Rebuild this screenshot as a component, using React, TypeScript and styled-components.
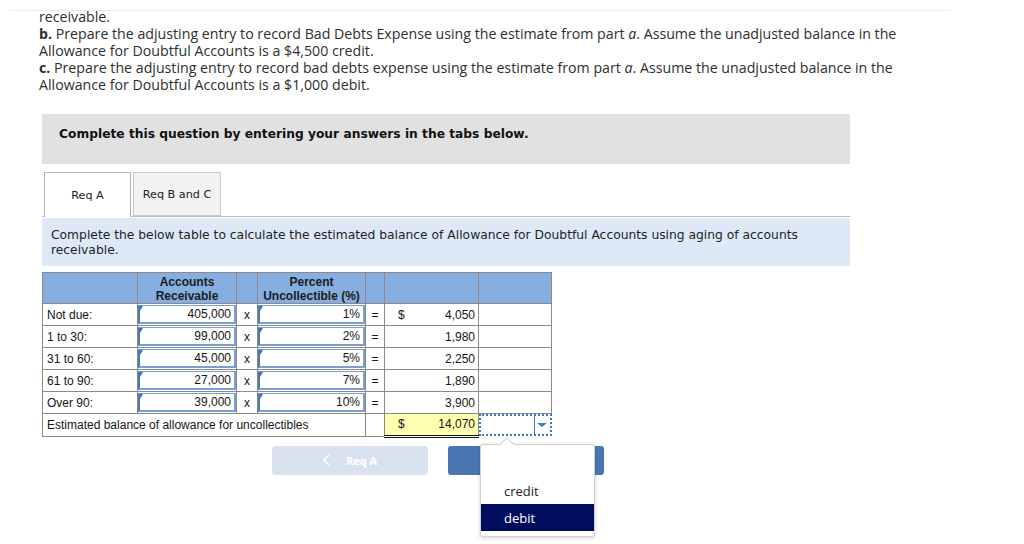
import React from "react"
import styled, { createGlobalStyle } from "styled-components"

const GlobalStyle = createGlobalStyle`
    html, body {
        margin: 0;
        padding: 0;
        background: #fff;
    }
    body {
        width: 1024px;
        height: 544px;
        overflow: hidden;
    }
    * {
        box-sizing: border-box;
    }
`

const Page = styled.div`
    padding: 10px 0 0 39px;
`

const Rule = styled.div`
    height: 1px;
    width: 940px;
    margin-left: -29px;
    background: #ececec;
`

const Intro = styled.div`
    margin-top: -3px;
    font-family: "Open Sans", "Liberation Sans", sans-serif;
    font-size: 14.2px;
    line-height: 17px;
    color: #2e2e2e;

    p {
        margin: 0;
    }
`

const Panel = styled.div`
    margin: 21px 0 0 3px;
    width: 808px;
    height: 50px;
    padding: 13px 0 0 17px;
    background: #e1e1e1;
    font-family: "DejaVu Sans", Verdana, sans-serif;
    font-size: 12.25px;
    line-height: 15px;
    font-weight: bold;
    color: #111;
`

const TabBar = styled.div`
    margin: 8px 0 0 3px;
    width: 808px;
    padding-left: 2px;
    display: flex;
    gap: 2px;
    border-bottom: 1px solid #bdbdbd;
`

const Tab = styled.div<{ $active?: boolean }>`
    width: ${(p) => (p.$active ? 87 : 88)}px;
    height: ${(p) => (p.$active ? 45 : 44)}px;
    margin-bottom: ${(p) => (p.$active ? -1 : 0)}px;
    display: flex;
    align-items: center;
    justify-content: center;
    border: 1px solid ${(p) => (p.$active ? "#b3b3b3" : "#c9c9c9")};
    border-bottom: ${(p) => (p.$active ? "none" : "1px solid #c9c9c9")};
    background: ${(p) => (p.$active ? "#fff" : "#f2f2f2")};
    font-family: "DejaVu Sans", Verdana, sans-serif;
    font-size: 11.2px;
    color: #222;
`

const Info = styled.div`
    margin: 1px 0 0 3px;
    width: 808px;
    padding: 10px 9px 8px;
    background: #dde9f7;
    font-family: "DejaVu Sans", Verdana, sans-serif;
    font-size: 12.3px;
    line-height: 15px;
    color: #1f1f1f;
`

const Table = styled.table`
    margin: 6px 0 0 3px;
    border-collapse: collapse;
    table-layout: fixed;
    width: 509px;
    font-family: "Liberation Sans", Arial, sans-serif;
    font-size: 12px;
    color: #151515;
`

const Th = styled.th`
    height: 31px;
    padding: 0;
    background: #86aee0;
    border: 1px solid #8a8a8a;
    font-weight: bold;
    line-height: 14px;
    text-align: center;
    vertical-align: bottom;
    color: #1c1c1c;
`

const Td = styled.td<{ $align?: string }>`
    height: 21.6px;
    padding: 0 4px;
    border: 1px solid #8a8a8a;
    text-align: ${(p) => p.$align || "left"};
    white-space: nowrap;
`

const InputTd = styled.td`
    height: 21.6px;
    padding: 1px 0;
    border: 1px solid #8a8a8a;
`

const InputBox = styled.div`
    position: relative;
    height: 19px;
    padding-right: 3px;
    display: flex;
    align-items: center;
    justify-content: flex-end;
    border: 2px solid #7d9fcf;
    border-left-color: #4c79b6;
    border-top-width: 1px;

    &::before {
        content: "";
        position: absolute;
        left: 0;
        top: 0;
        border-top: 5px solid #2f73c6;
        border-right: 3px solid transparent;
    }
`

const AmountTd = styled.td<{ $total?: boolean }>`
    height: 21.6px;
    padding: 0 3px 0 13px;
    border: 1px solid #8a8a8a;
    background: ${(p) => (p.$total ? "#ffffb0" : "#fff")};
    ${(p) =>
        p.$total &&
        `
        border-top: 1px solid #555;
        border-left: 1px solid #555;
        border-bottom: 3px double #111;
    `}
`

const Amount = styled.div`
    display: flex;
    justify-content: space-between;
`

const DropTd = styled.td`
    height: 21.6px;
    padding: 0;
    border: none;
`

const DropBox = styled.div`
    position: relative;
    height: 22px;
    display: flex;
    justify-content: flex-end;
    border: 2px dotted #3d78c4;
`

const DropArrow = styled.div`
    width: 16px;
    display: flex;
    align-items: center;
    justify-content: center;
    border-left: 1px solid #3d78c4;

    &::after {
        content: "";
        border-top: 4px solid #3d78c4;
        border-left: 5px solid transparent;
        border-right: 5px solid transparent;
    }
`

const Menu = styled.div`
    position: absolute;
    left: -1px;
    top: 28px;
    z-index: 5;
    width: 115px;
    padding: 5px 0;
    background: #fff;
    border: 1px solid #cfcfcf;
    border-radius: 3px;
    box-shadow: 0 1px 4px rgba(0, 0, 0, 0.18);
    font-family: "Open Sans", "Liberation Sans", sans-serif;
    font-size: 13px;
    color: #222;

    &::before {
        content: "";
        position: absolute;
        left: 21px;
        top: -6px;
        width: 9px;
        height: 9px;
        background: #fff;
        border-top: 1px solid #cfcfcf;
        border-left: 1px solid #cfcfcf;
        transform: rotate(45deg);
    }
`

const MenuItem = styled.div<{ $selected?: boolean }>`
    height: 27px;
    padding-left: 23px;
    display: flex;
    align-items: center;
    background: ${(p) => (p.$selected ? "#000c5e" : "transparent")};
    color: ${(p) => (p.$selected ? "#fff" : "#222")};
`

const NavRow = styled.div`
    margin: 8px 0 0 233px;
    display: flex;
    gap: 20px;
`

const NavButton = styled.div<{ $primary?: boolean }>`
    width: 156px;
    height: 29px;
    display: flex;
    align-items: center;
    justify-content: center;
    gap: 16px;
    border-radius: 3px;
    background: ${(p) => (p.$primary ? "#4a77b4" : "#d9e3f0")};
    color: #fff;
    font-family: "Open Sans", "Liberation Sans", sans-serif;
    font-size: 11px;
    font-weight: bold;
`

const rows = [
    { label: "Not due:", ar: "405,000", pct: "1%", amt: "4,050", dollar: true },
    { label: "1 to 30:", ar: "99,000", pct: "2%", amt: "1,980" },
    { label: "31 to 60:", ar: "45,000", pct: "5%", amt: "2,250" },
    { label: "61 to 90:", ar: "27,000", pct: "7%", amt: "1,890" },
    { label: "Over 90:", ar: "39,000", pct: "10%", amt: "3,900" },
]

const Chevron = ({ dir }: { dir: "left" | "right" }) => (
    <svg width="7" height="12" viewBox="0 0 7 12">
        <polyline
            points={dir === "left" ? "6,1 1,6 6,11" : "1,1 6,6 1,11"}
            fill="none"
            stroke="#fff"
            strokeWidth="1.6"
        />
    </svg>
)

export default function App() {
    return (
        <>
            <GlobalStyle />
            <Page>
                <Rule />
                <Intro>
                    <p>receivable.</p>
                    <p>
                        <b>b.</b> Prepare the adjusting entry to record Bad Debts Expense using the
                        estimate from part <i>a</i>. Assume the unadjusted balance in the
                        <br />
                        Allowance for Doubtful Accounts is a $4,500 credit.
                    </p>
                    <p>
                        <b>c.</b> Prepare the adjusting entry to record bad debts expense using the
                        estimate from part <i>a</i>. Assume the unadjusted balance in the
                        <br />
                        Allowance for Doubtful Accounts is a $1,000 debit.
                    </p>
                </Intro>

                <Panel>Complete this question by entering your answers in the tabs below.</Panel>

                <TabBar>
                    <Tab $active>Req A</Tab>
                    <Tab>Req B and C</Tab>
                </TabBar>

                <Info>
                    Complete the below table to calculate the estimated balance of Allowance for
                    Doubtful Accounts using aging of accounts
                    <br />
                    receivable.
                </Info>

                <Table>
                    <colgroup>
                        <col style={{ width: 95 }} />
                        <col style={{ width: 99 }} />
                        <col style={{ width: 21 }} />
                        <col style={{ width: 108 }} />
                        <col style={{ width: 19 }} />
                        <col style={{ width: 94 }} />
                        <col style={{ width: 73 }} />
                    </colgroup>
                    <thead>
                        <tr>
                            <Th />
                            <Th>
                                Accounts
                                <br />
                                Receivable
                            </Th>
                            <Th />
                            <Th>
                                Percent
                                <br />
                                Uncollectible (%)
                            </Th>
                            <Th />
                            <Th />
                            <Th />
                        </tr>
                    </thead>
                    <tbody>
                        {rows.map((r) => (
                            <tr key={r.label}>
                                <Td>{r.label}</Td>
                                <InputTd>
                                    <InputBox>{r.ar}</InputBox>
                                </InputTd>
                                <Td $align="center">x</Td>
                                <InputTd>
                                    <InputBox>{r.pct}</InputBox>
                                </InputTd>
                                <Td $align="center">=</Td>
                                <AmountTd>
                                    <Amount>
                                        <span>{r.dollar ? "$" : ""}</span>
                                        <span>{r.amt}</span>
                                    </Amount>
                                </AmountTd>
                                <Td />
                            </tr>
                        ))}
                        <tr>
                            <Td colSpan={4}>Estimated balance of allowance for uncollectibles</Td>
                            <Td />
                            <AmountTd $total>
                                <Amount>
                                    <span>$</span>
                                    <span>14,070</span>
                                </Amount>
                            </AmountTd>
                            <DropTd>
                                <DropBox>
                                    <DropArrow />
                                    <Menu>
                                        <MenuItem />
                                        <MenuItem>credit</MenuItem>
                                        <MenuItem $selected>debit</MenuItem>
                                    </Menu>
                                </DropBox>
                            </DropTd>
                        </tr>
                    </tbody>
                </Table>

                <NavRow>
                    <NavButton>
                        <Chevron dir="left" />
                        <span>Req A</span>
                    </NavButton>
                    <NavButton $primary>
                        <span>Req B and C</span>
                        <Chevron dir="right" />
                    </NavButton>
                </NavRow>
            </Page>
        </>
    )
}
